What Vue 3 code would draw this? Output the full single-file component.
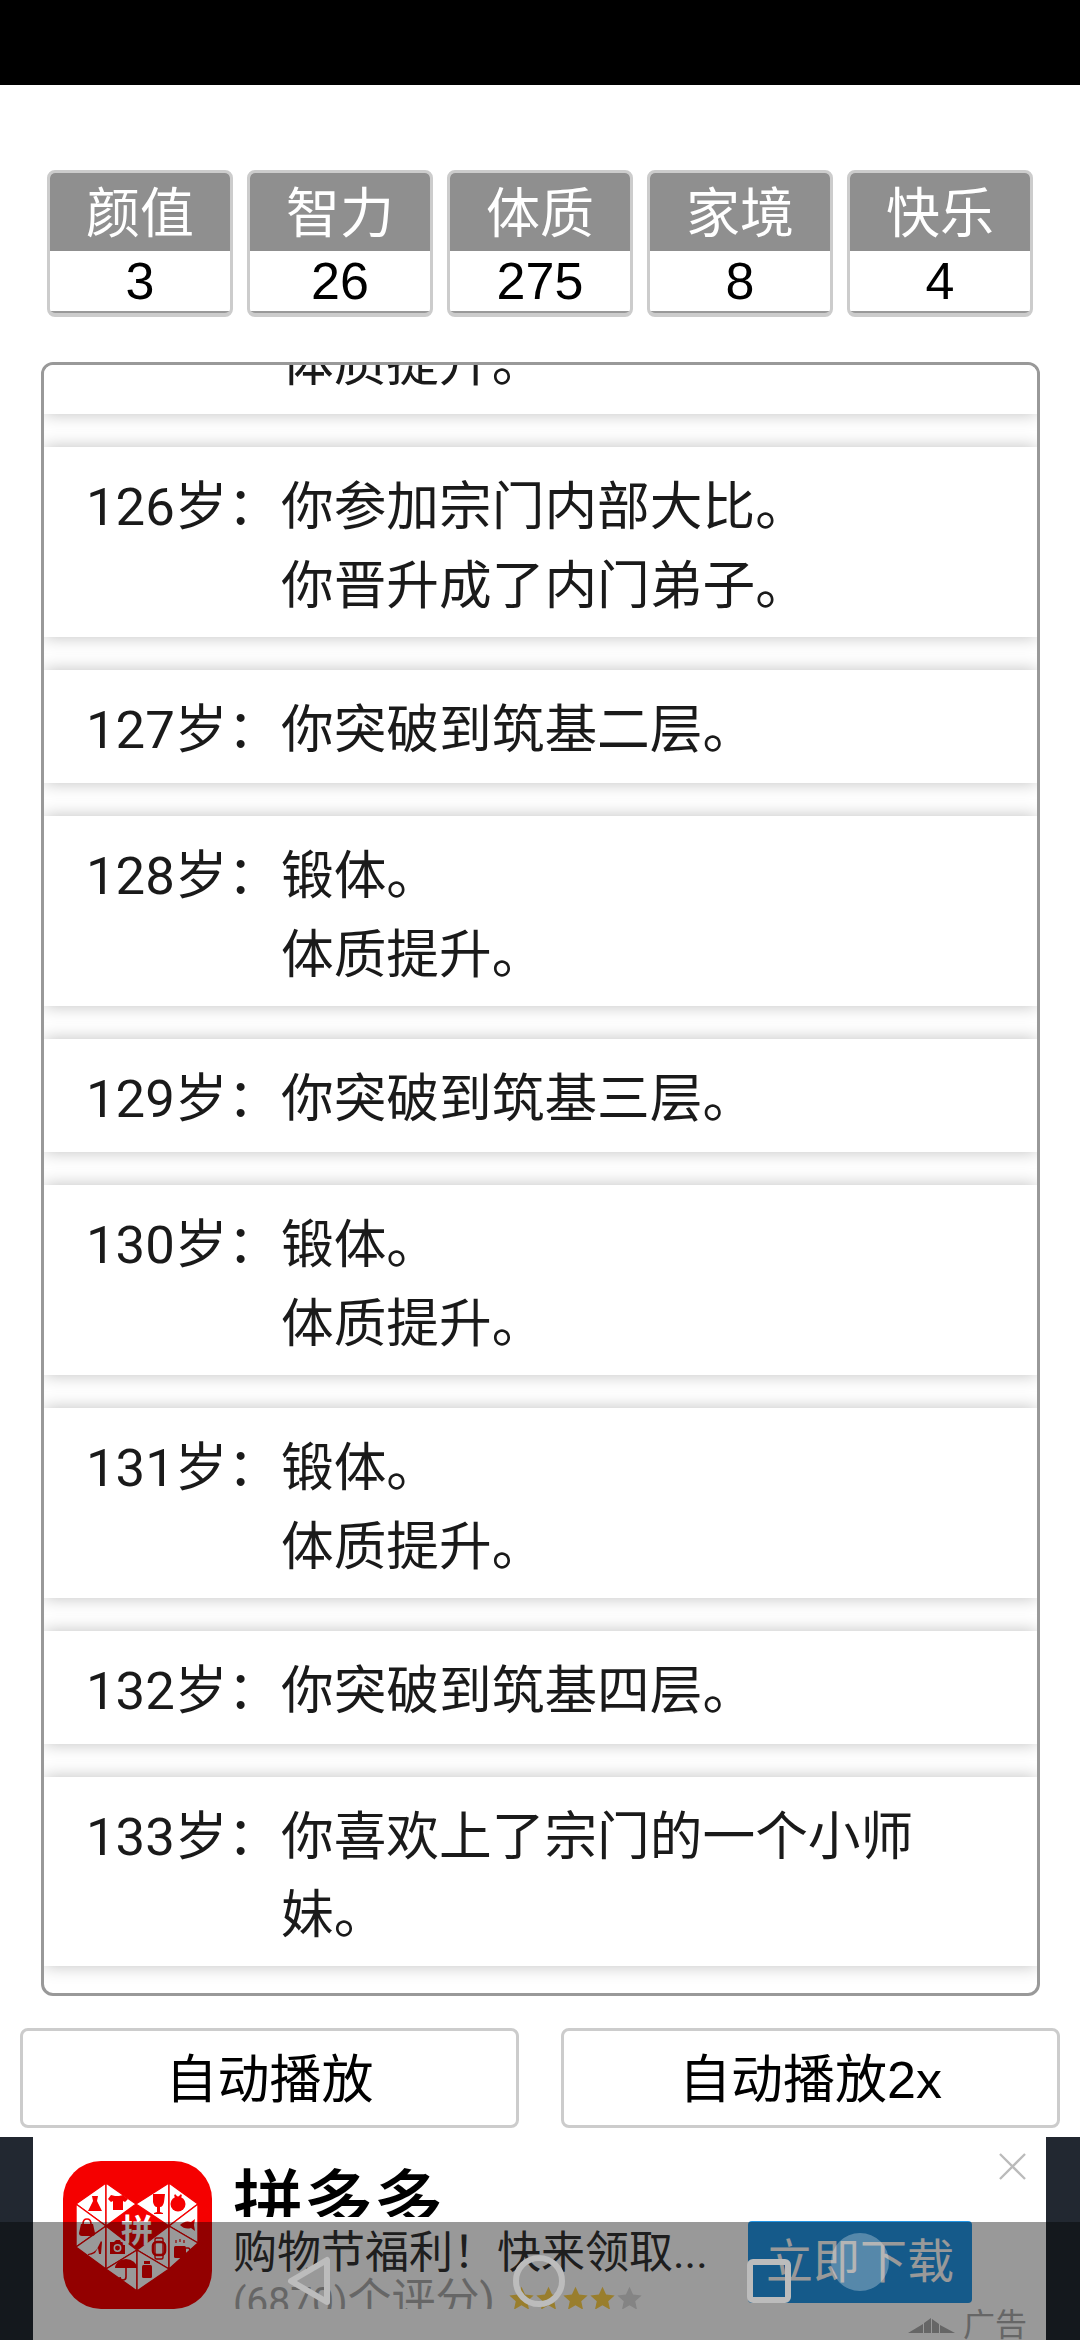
<script setup>
const stats = [
  { label: '颜值', value: 3 },
  { label: '智力', value: 26 },
  { label: '体质', value: 275 },
  { label: '家境', value: 8 },
  { label: '快乐', value: 4 }
]
const rows = [
  { age: '125岁：', lines: ['锻体。', '体质提升。'] },
  { age: '126岁：', lines: ['你参加宗门内部大比。', '你晋升成了内门弟子。'] },
  { age: '127岁：', lines: ['你突破到筑基二层。'] },
  { age: '128岁：', lines: ['锻体。', '体质提升。'] },
  { age: '129岁：', lines: ['你突破到筑基三层。'] },
  { age: '130岁：', lines: ['锻体。', '体质提升。'] },
  { age: '131岁：', lines: ['锻体。', '体质提升。'] },
  { age: '132岁：', lines: ['你突破到筑基四层。'] },
  { age: '133岁：', lines: ['你喜欢上了宗门的一个小师妹。'] }
]
const stars = [1, 1, 1, 1, 0]
const cells = [
  '13,43 43,22 43,65',
  '43,22 73,43 43,65',
  '73,43 106,22 106,65',
  '106,22 135,43 106,65',
  '13,43 43,65 13,86',
  '135,43 135,82 106,65',
  '13,86 43,65 43,108',
  '43,65 74,89 43,108',
  '106,65 106,108 74,89',
  '106,65 135,82 106,108',
  '43,108 74,89 74,130',
  '74,89 106,108 74,130'
]
</script>

<template>
  <div class="page">
    <div class="status"></div>
    <div class="stats">
      <div v-for="s in stats" :key="s.label" class="stat">
        <div class="stat-label">{{ s.label }}</div>
        <div class="stat-value">{{ s.value }}</div>
      </div>
    </div>
    <div class="list">
      <div class="list-inner">
        <div v-for="r in rows" :key="r.age" class="row">
          <div class="age">{{ r.age }}</div>
          <div class="content">
            <div v-for="l in r.lines" :key="l" class="line">{{ l }}</div>
          </div>
        </div>
      </div>
    </div>
    <div class="buttons">
      <div class="btn">自动播放</div>
      <div class="btn">自动播放2x</div>
    </div>
    <div class="ad">
      <div class="ad-card">
        <svg class="logo" viewBox="0 0 149 148">
          <rect width="149" height="148" rx="38" fill="#f50000" />
          <polygon v-for="c in cells" :key="c" :points="c" fill="#fff" stroke="#f50000" stroke-width="1.4" stroke-linejoin="round" />
          <path d="M29 35h6l-1 5 5 10H25l5-10z" fill="#f50000" />
          <path d="M48 34l4 1h4l4-1 5 4-3 3-2-1v9H50v-9l-2 1-3-3z" fill="#f50000" />
          <path d="M90 33h12l-1 8q-1 5-4 5v5l3 1v1h-9v-1l3-1v-5q-3 0-4-5z" fill="#f50000" />
          <circle cx="115" cy="43" r="7.5" fill="#f50000" />
          <path d="M112 33l3 3 3-3 1 2-3 3h-2l-3-3z" fill="#f50000" />
          <path d="M18 63h12l2 9q0 3-3 3H19q-3 0-3-3z" fill="#f50000" />
          <path d="M20 63q0-5 4-5t4 5" fill="none" stroke="#f50000" stroke-width="1.6" />
          <path d="M117 64q5-5 11-3l4-3-1 6 1 6-4-3q-6 2-11-3z" fill="#f50000" />
          <path d="M25 93q6-1 9-5l4-8 1 1-1 12h-2l-1-6-3 5q-3 2-7 2z" fill="#f50000" />
          <path d="M47 81h4l2-2h4l1 2h4v12H47z" fill="#f50000" />
          <circle cx="54.500" cy="87" r="3.200" fill="none" stroke="#fff" stroke-width="1.500" />
          <rect x="90" y="81" width="12" height="13" rx="4" fill="none" stroke="#f50000" stroke-width="2.600" />
          <rect x="92" y="77" width="8" height="21" rx="1.500" fill="none" stroke="#f50000" stroke-width="1.400" />
          <rect x="111" y="85" width="12" height="12" rx="1.500" fill="#f50000" />
          <path d="M123 87h2q2 0 2 3t-4 4" fill="none" stroke="#f50000" stroke-width="1.600" />
          <path d="M113 79v3M117 78v3M121 79v3" stroke="#f50000" stroke-width="1.200" />
          <path d="M52 107a11 9 0 0 1 22 0z" fill="#f50000" />
          <path d="M63 107v9q0 3-3 3t-3-3" fill="none" stroke="#f50000" stroke-width="1.600" />
          <rect x="79" y="104" width="10" height="13" rx="1.500" fill="#f50000" />
          <rect x="81" y="100" width="6" height="3" fill="#f50000" />
          <text x="74" y="81" class="logo-char">拼</text>
        </svg>
        <div class="ad-text">
          <div class="ad-title">拼多多</div>
          <div class="ad-sub">购物节福利！快来领取...</div>
          <div class="ad-rating">
            <span class="ad-count"><span class="ad-num">(6870)</span>个评分)</span>
            <svg v-for="(on, i) in stars" :key="i" class="star" viewBox="0 0 24 24">
              <path d="M12 1.5l3.2 7 7.6.8-5.700 5.100 1.600 7.500L12 18.100l-6.700 3.800 1.600-7.500L1.200 9.300l7.600-.8z" :fill="on ? '#ffd24c' : '#dcdcdc'" />
            </svg>
          </div>
        </div>
        <div class="ad-side">
          <svg class="close" viewBox="0 0 28 28">
            <path d="M1 1L27 27M27 1L1 27" stroke="#bbb" stroke-width="2.400" fill="none" />
          </svg>
          <div class="cta">立即下载</div>
          <div class="ad-mark">
            <svg class="mark" viewBox="0 0 47 15">
              <path d="M0 15L15 6V15ZM16 5L23 0V15H16ZM24 1L31 6V15H24ZM32 7L47 15H32Z" fill="#aaa" />
            </svg>
            <span>广告</span>
          </div>
        </div>
      </div>
    </div>
    <div class="nav">
      <span class="ripple"></span>
      <svg class="nav-svg" viewBox="0 0 1080 118">
        <path d="M327 38V80L291 59Z" stroke="#bcbcbc" stroke-width="6" stroke-linejoin="round" fill="none" />
        <circle cx="539" cy="59" r="23" stroke="#bcbcbc" stroke-width="6" fill="none" />
        <rect x="750" y="40" width="38" height="38" rx="3" stroke="#bcbcbc" stroke-width="6" fill="none" />
      </svg>
    </div>
  </div>
</template>

<style scoped>
.page {
  position: relative;
  width: 1080px;
  height: 2340px;
  overflow: hidden;
  background: #fff;
  font-family: Roboto, "Noto Sans CJK SC", sans-serif;
  color: #1a1a1a;
}
.status {
  height: 85px;
  background: #000;
}
.stats {
  display: flex;
  gap: 14px;
  margin: 85px 0 0 47px;
  font-family: "Liberation Sans", "Noto Sans CJK SC", sans-serif;
}
.stat {
  width: 186px;
  height: 147px;
  box-sizing: border-box;
  border: 3px solid #ccc;
  border-bottom-width: 4px;
  border-radius: 8px;
  overflow: hidden;
  text-align: center;
}
.stat-label {
  box-sizing: border-box;
  height: 78px;
  padding-top: 4px;
  background: #8f8f8f;
  color: #fff;
  font-size: 54px;
  line-height: 74px;
}
.stat-value {
  height: 62px;
  font-size: 52px;
  line-height: 60px;
  color: #000;
  border-bottom: 2px solid #999;
  box-sizing: border-box;
}
.list {
  box-sizing: border-box;
  width: 999px;
  height: 1634px;
  margin: 45px 0 0 41px;
  border: 3px solid #999;
  border-radius: 12px;
  overflow: hidden;
}
.list-inner {
  margin-top: -141px;
}
.row {
  display: flex;
  box-sizing: border-box;
  min-height: 113px;
  padding: 21px 42px 12px 42px;
  margin-bottom: 33px;
  line-height: 78px;
  font-size: 52.7px;
  background: #fff;
  box-shadow: 0 0 16px rgba(0, 0, 0, .25);
}
.age {
  width: 195px;
  flex: none;
  white-space: nowrap;
}
.content {
  width: 650px;
}
.line + .line {
  margin-top: 1px;
}
.buttons {
  display: flex;
  justify-content: space-between;
  margin: 32px 20px 0 20px;
  font-family: "Liberation Sans", "Noto Sans CJK SC", sans-serif;
}
.btn {
  box-sizing: border-box;
  width: 499px;
  height: 100px;
  border: 3px solid #ccc;
  border-radius: 8px;
  text-align: center;
  font-size: 52px;
  line-height: 98px;
  color: #000;
}
.ad {
  position: absolute;
  left: 0;
  top: 2137px;
  width: 1080px;
  height: 203px;
  background: #222831;
  overflow: hidden;
}
.ad-card {
  position: relative;
  display: flex;
  width: 1013px;
  height: 203px;
  margin-left: 33px;
  background: #fff;
}
.logo {
  width: 149px;
  height: 148px;
  margin: 24px 0 0 30px;
  flex: none;
}
.logo-char {
  fill: #fff;
  font-size: 32px;
  font-weight: 700;
  text-anchor: middle;
}
.ad-text {
  margin-left: 21px;
  height: 172px;
  overflow: hidden;
  width: 502px;
  flex: none;
}
.ad-title {
  height: 80px;
  padding-top: 29px;
  box-sizing: border-box;
  overflow: hidden;
  font-size: 70px;
  line-height: 76px;
  font-weight: 500;
  color: #000;
}
.ad-sub {
  margin-top: 11px;
  font-size: 44px;
  line-height: 50px;
  white-space: nowrap;
  color: #333;
}
.ad-rating {
  display: flex;
  align-items: center;
  margin-top: -7px;
}
.ad-count {
  font-size: 44px;
  line-height: 58px;
  color: #aaa;
  margin-right: 13px;
  white-space: nowrap;
}
.ad-num {
  font-size: 39px;
}
.star {
  width: 27px;
  height: 27px;
  flex: none;
  margin-bottom: 5px;
}
.ad-side {
  position: relative;
  flex: 1;
}
.close {
  position: absolute;
  right: 20px;
  top: 16px;
  width: 27px;
  height: 27px;
}
.cta {
  position: absolute;
  left: 13px;
  top: 84px;
  width: 224px;
  height: 82px;
  background: #2396e6;
  border-radius: 4px;
  color: #fff;
  font-size: 47px;
  line-height: 82px;
  text-align: center;
}
.ad-mark {
  position: absolute;
  right: 19px;
  top: 168px;
  display: flex;
  align-items: center;
  gap: 8px;
  font-size: 32px;
  line-height: 40px;
  color: #aaa;
}
.mark {
  width: 47px;
  height: 15px;
}
.nav {
  position: absolute;
  left: 0;
  top: 2222px;
  width: 1080px;
  height: 118px;
  background: rgba(0, 0, 0, .4);
}
.nav-svg {
  position: absolute;
  inset: 0;
  width: 1080px;
  height: 118px;
}
.ripple {
  position: absolute;
  left: 831px;
  top: 11px;
  width: 58px;
  height: 58px;
  border-radius: 50%;
  background: rgba(255, 255, 255, .28);
}
</style>
